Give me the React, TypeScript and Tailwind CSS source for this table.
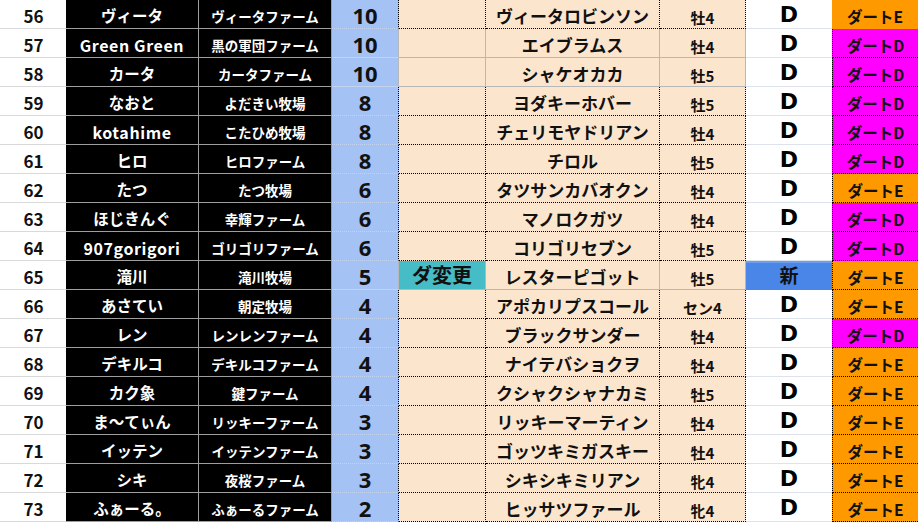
import React from "react";

type Row = {
  n: number;
  name: string;
  farm: string;
  pt: string;
  note: string;
  horse: string;
  sex: string;
  rank: string;
  dirt: "E" | "D";
};

const rows: Row[] = [
  { n: 56, name: "ヴィータ", farm: "ヴィータファーム", pt: "10", note: "", horse: "ヴィータロビンソン", sex: "牡4", rank: "D", dirt: "E" },
  { n: 57, name: "Green Green", farm: "黒の軍団ファーム", pt: "10", note: "", horse: "エイブラムス", sex: "牡4", rank: "D", dirt: "D" },
  { n: 58, name: "カータ", farm: "カータファーム", pt: "10", note: "", horse: "シャケオカカ", sex: "牡5", rank: "D", dirt: "D" },
  { n: 59, name: "なおと", farm: "よだきい牧場", pt: "8", note: "", horse: "ヨダキーホバー", sex: "牡5", rank: "D", dirt: "D" },
  { n: 60, name: "kotahime", farm: "こたひめ牧場", pt: "8", note: "", horse: "チェリモヤドリアン", sex: "牡4", rank: "D", dirt: "D" },
  { n: 61, name: "ヒロ", farm: "ヒロファーム", pt: "8", note: "", horse: "チロル", sex: "牡5", rank: "D", dirt: "D" },
  { n: 62, name: "たつ", farm: "たつ牧場", pt: "6", note: "", horse: "タツサンカバオクン", sex: "牡4", rank: "D", dirt: "E" },
  { n: 63, name: "ほじきんぐ", farm: "幸輝ファーム", pt: "6", note: "", horse: "マノロクガツ", sex: "牡4", rank: "D", dirt: "D" },
  { n: 64, name: "907gorigori", farm: "ゴリゴリファーム", pt: "6", note: "", horse: "コリゴリセブン", sex: "牡5", rank: "D", dirt: "D" },
  { n: 65, name: "滝川", farm: "滝川牧場", pt: "5", note: "ダ変更", horse: "レスターピゴット", sex: "牡5", rank: "新", dirt: "E" },
  { n: 66, name: "あさてい", farm: "朝定牧場", pt: "4", note: "", horse: "アポカリプスコール", sex: "セン4", rank: "D", dirt: "E" },
  { n: 67, name: "レン", farm: "レンレンファーム", pt: "4", note: "", horse: "ブラックサンダー", sex: "牡4", rank: "D", dirt: "D" },
  { n: 68, name: "デキルコ", farm: "デキルコファーム", pt: "4", note: "", horse: "ナイテバショクヲ", sex: "牡4", rank: "D", dirt: "E" },
  { n: 69, name: "カク象", farm: "鍵ファーム", pt: "4", note: "", horse: "クシャクシャナカミ", sex: "牡5", rank: "D", dirt: "E" },
  { n: 70, name: "ま～てぃん", farm: "リッキーファーム", pt: "3", note: "", horse: "リッキーマーティン", sex: "牡4", rank: "D", dirt: "E" },
  { n: 71, name: "イッテン", farm: "イッテンファーム", pt: "3", note: "", horse: "ゴッツキミガスキー", sex: "牡4", rank: "D", dirt: "E" },
  { n: 72, name: "シキ", farm: "夜桜ファーム", pt: "3", note: "", horse: "シキシキミリアン", sex: "牝4", rank: "D", dirt: "E" },
  { n: 73, name: "ふぁーる。", farm: "ふぁーるファーム", pt: "2", note: "", horse: "ヒッサツファール", sex: "牝4", rank: "D", dirt: "E" },
];

const solidRows = new Set([57, 58, 65]);

export default function App() {
  return (
    <div
      className="w-[918px] h-[522px] overflow-hidden bg-white font-bold"
      style={{ fontFamily: '"Noto Sans CJK JP", "Noto Sans", sans-serif' }}
    >
      <div className="grid grid-cols-[66px_133px_133px_67px_87px_174px_86px_86px_86px]">
        {rows.map((r) => {
          const solid = solidRows.has(r.n);
          const latin = /^[\x00-\x7f]+$/.test(r.name);
          const peachBorder = solid
            ? "border-r border-b border-solid border-[#b7b7b7]"
            : "border-r border-b border-dotted border-black";
          return (
            <React.Fragment key={r.n}>
              <div className="h-[29px] flex items-center justify-center pl-[1px] pt-[3px] border-b border-[#d9d9d9] text-[17px] text-[#111] leading-none">
                {r.n}
              </div>
              <div
                className={
                  latin
                    ? "h-[29px] flex items-center justify-center pt-[4px] bg-black border-r border-b border-[#9e9e9e] text-white text-[16px] leading-none tracking-[0.6px]"
                    : "h-[29px] flex items-center justify-center pt-[4px] bg-black border-r border-b border-[#9e9e9e] text-white text-[15.5px] leading-none"
                }
              >
                {r.name}
              </div>
              <div className="h-[29px] flex items-center justify-center pt-[6px] bg-black border-r border-b border-[#9e9e9e] text-white text-[13.5px] leading-none">
                {r.farm}
              </div>
              <div
                className={
                  solid
                    ? "h-[29px] flex items-start justify-center pt-[4px] bg-[#a4c2f4] border-r border-b border-solid border-r-[#b7b7b7] border-b-[#c3d3ee] text-[22px] text-[#111] leading-[22px]"
                    : "h-[29px] flex items-start justify-center pt-[4px] bg-[#a4c2f4] border-r border-b border-r-black border-dotted border-b-[#c3d3ee] text-[22px] text-[#111] leading-[22px]"
                }
                style={{ fontFamily: '"Noto Sans", sans-serif' }}
              >
                {r.pt}
              </div>
              {r.note ? (
                <div className="h-[29px] flex items-center justify-center pb-[1px] bg-[#46bdc6] border-r border-b border-[#b7b7b7] text-[20px] text-[#111] leading-none">
                  {r.note}
                </div>
              ) : (
                <div className={"h-[29px] bg-[#fce5cd] " + peachBorder}></div>
              )}
              <div
                className={
                  "h-[29px] flex items-center justify-center pt-[3px] bg-[#fce5cd] text-[17px] text-[#111] leading-none " +
                  peachBorder
                }
              >
                {r.horse}
              </div>
              <div
                className={
                  "h-[29px] flex items-center justify-center pt-[6px] bg-[#fce5cd] text-[15px] text-[#111] leading-none " +
                  peachBorder
                }
              >
                {r.sex}
              </div>
              {r.rank === "新" ? (
                <div className="h-[29px] flex items-center justify-center pb-[4px] bg-[#4a86e8] border-t-2 border-t-[#6d9eeb] text-[19px] text-[#111] leading-none">
                  {r.rank}
                </div>
              ) : (
                <div
                  className="h-[29px] flex items-start justify-center pt-[4px] bg-white border-b border-[#dde3ec] text-[22px] text-black leading-[22px]"
                  style={{ fontFamily: '"DejaVu Sans", sans-serif' }}
                >
                  {r.rank}
                </div>
              )}
              <div
                className={
                  (r.dirt === "E" ? "bg-[#ff9900] " : "bg-[#ff00ff] ") +
                  (r.n === 56
                    ? "h-[29px] flex items-center justify-center pt-[6px] border-b border-[#ff9900] text-[15.5px] text-[#111] leading-none"
                    : "h-[29px] flex items-center justify-center pt-[6px] border-l border-b border-dotted border-black text-[15.5px] text-[#111] leading-none")
                }
              >
                {"ダート" + r.dirt}
              </div>
            </React.Fragment>
          );
        })}
      </div>
    </div>
  );
}
